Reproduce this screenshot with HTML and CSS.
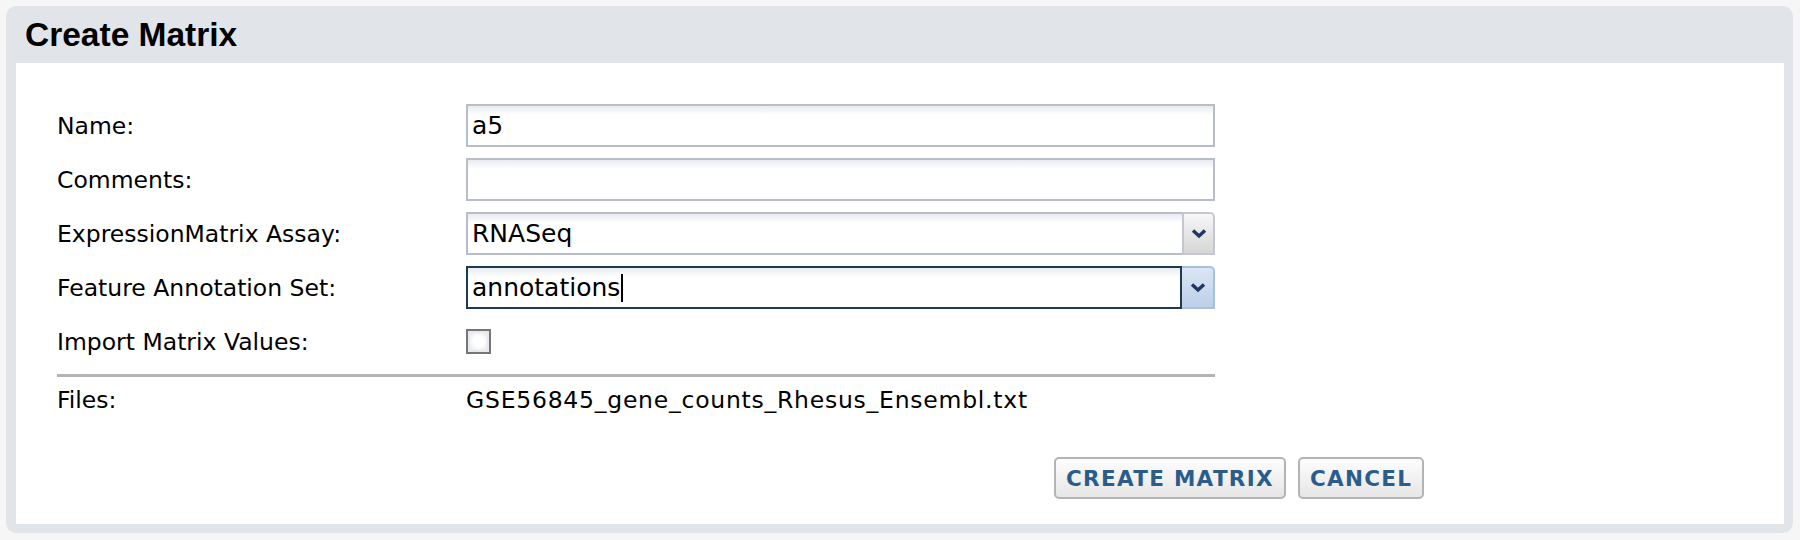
FILE: index.html
```html
<!DOCTYPE html>
<html>
<head>
<meta charset="utf-8">
<link rel="stylesheet" href="styles.css">
</head>
<body>
<div class="panel">
  <div class="panel-header">Create Matrix</div>
  <div class="panel-body">
    <div class="form">
      <label class="label">Name:</label>
      <div class="field"><div class="textbox">a5</div></div>

      <label class="label">Comments:</label>
      <div class="field"><div class="textbox"></div></div>

      <label class="label">ExpressionMatrix Assay:</label>
      <div class="field">
        <div class="combo">
          <div class="textbox combo-input">RNASeq</div>
          <div class="combo-trigger">
            <svg width="16" height="11" viewBox="0 0 16 11"><polyline points="2,2.5 8,8 14,2.5" fill="none" stroke="#1f3863" stroke-width="3.5"/></svg>
          </div>
        </div>
      </div>

      <label class="label">Feature Annotation Set:</label>
      <div class="field">
        <div class="combo focused">
          <div class="textbox combo-input">annotations<span class="caret"></span></div>
          <div class="combo-trigger">
            <svg width="16" height="11" viewBox="0 0 16 11"><polyline points="2,2.5 8,8 14,2.5" fill="none" stroke="#1f3863" stroke-width="3.5"/></svg>
          </div>
        </div>
      </div>

      <label class="label">Import Matrix Values:</label>
      <div class="field"><span class="checkbox"></span></div>
    </div>

    <div class="separator"></div>

    <div class="files">
      <div class="label">Files:</div>
      <div class="files-value">GSE56845_gene_counts_Rhesus_Ensembl.txt</div>
    </div>

    <div class="actions">
      <button class="btn">CREATE MATRIX</button>
      <button class="btn">CANCEL</button>
    </div>
  </div>
</div>
</body>
</html>
```

FILE: styles.css
```css
html, body {
  margin: 0;
  padding: 0;
  background: #f6f6f6;
}
body {
  padding: 6px 7px 7px 6px;
  font-family: "DejaVu Sans", Verdana, sans-serif;
}
.panel {
  background: #e1e5e9;
  border-radius: 10px;
  padding: 0 9px 9px 10px;
}
.panel-header {
  height: 57px;
  line-height: 57px;
  padding-left: 9px;
  font-family: "Liberation Sans", Arial, sans-serif;
  font-weight: bold;
  font-size: 33.5px;
  color: #000;
}
.panel-body {
  background: #fff;
  height: 461px;
  box-sizing: border-box;
  padding: 41px 0 0 41px;
}
.form, .files {
  display: grid;
  grid-template-columns: 409px 749px;
  grid-auto-rows: 43px;
  row-gap: 11px;
  align-items: center;
}
.label {
  font-size: 23.5px;
  color: #000;
}
.field {
  height: 43px;
  display: flex;
  align-items: center;
}
.textbox {
  box-sizing: border-box;
  width: 100%;
  height: 43px;
  border: 2px solid #b9bccb;
  background: linear-gradient(#e9ebef, #ffffff 9px);
  font-family: "DejaVu Sans", Tahoma, sans-serif;
  font-size: 25px;
  padding-left: 4px;
  color: #000;
  display: flex;
  align-items: center;
}
.combo {
  display: flex;
  width: 100%;
  height: 43px;
}
.combo-input {
  flex: 1;
  width: auto;
  border-right: none;
}
.combo-trigger {
  box-sizing: border-box;
  width: 33px;
  height: 43px;
  border: 2px solid #c4c6d0;
  border-radius: 0 5px 0 0;
  background: linear-gradient(#f7f7f7, #d6d6d6);
  display: flex;
  align-items: center;
  justify-content: center;
}
.focused .combo-input {
  border-color: #1c3b4d;
  border-right: 2px solid #1c3b4d;
}
.focused .combo-trigger {
  border-color: #a9c0dc;
  border-left: none;
  background: linear-gradient(#dbe6f4, #bccfe8);
}
.caret {
  display: inline-block;
  width: 2px;
  height: 28px;
  background: #000;
  margin-left: 1px;
}
.checkbox {
  box-sizing: border-box;
  width: 25px;
  height: 25px;
  border: 2px solid #767676;
  background: radial-gradient(#ffffff 35%, #dcdee6);
  box-shadow: inset 0 0 0 2px #e8e9ee;
}
.separator {
  width: 1158px;
  height: 3px;
  margin-top: 11px;
  background: #b4b4b4;
}
.files {
  margin-top: 1px;
}
.files-value {
  font-size: 23.5px;
  letter-spacing: 0.75px;
  color: #000;
}
.actions {
  display: flex;
  gap: 12px;
  margin-top: 36px;
  padding-left: 997px;
}
.btn {
  box-sizing: border-box;
  height: 42px;
  padding: 0 10px;
  border: 2px solid #b4b4b4;
  border-radius: 5px;
  background: linear-gradient(#fdfdfd, #e6e6e6);
  font-family: "DejaVu Sans", Verdana, sans-serif;
  font-weight: bold;
  font-size: 21.5px;
  letter-spacing: 1.3px;
  color: #2a5d8c;
}
```
